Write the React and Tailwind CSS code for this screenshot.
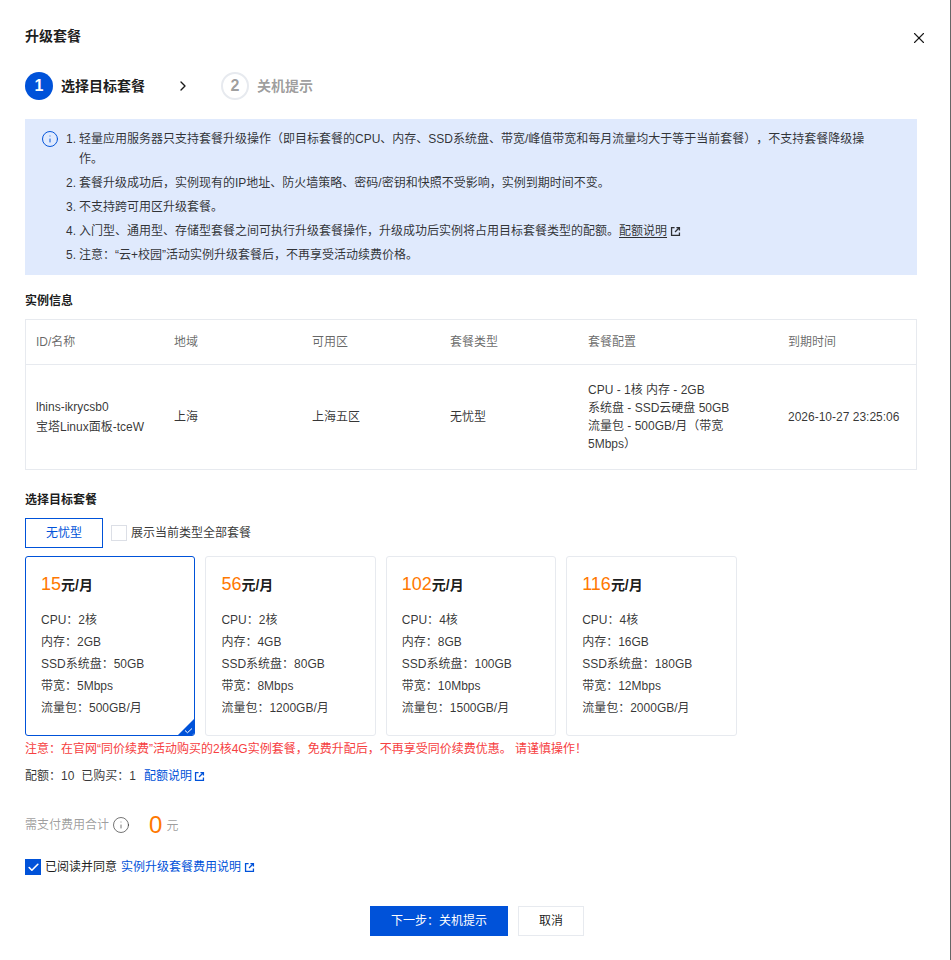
import { X, ChevronRight, Info, Check } from "lucide-react";

const plans = [
  { price: "15", cpu: "2核", mem: "2GB", ssd: "50GB", bw: "5Mbps", flow: "500GB/月", active: true },
  { price: "56", cpu: "2核", mem: "4GB", ssd: "80GB", bw: "8Mbps", flow: "1200GB/月" },
  { price: "102", cpu: "4核", mem: "8GB", ssd: "100GB", bw: "10Mbps", flow: "1500GB/月" },
  { price: "116", cpu: "4核", mem: "16GB", ssd: "180GB", bw: "12Mbps", flow: "2000GB/月" },
];

function ExtIcon({ className }) {
  return (
    <svg viewBox="0 0 12 12" fill="none" stroke="currentColor" strokeWidth="1.4" className={className}>
      <path d="M5 1.7H1.7v8.6h8.6V7" />
      <path d="M7 1.7h3.3V5M10.3 1.7L5.5 6.5" />
    </svg>
  );
}

function PlanCard({ plan }) {
  return (
    <div className={"relative w-[170.4px] h-[180px] rounded-[3px] border pl-[15px] pt-[15px] overflow-hidden " + (plan.active ? "border-[#0052d9]" : "border-[#e7eaef]")}>
      <div className="h-6 flex items-baseline font-bold text-[14px] leading-6 text-black/90">
        <span className="text-[18px] font-normal text-[#ff7800]">{plan.price}</span>
        <span>元/月</span>
      </div>
      <div className="mt-[13px] text-[12px] leading-[22px] text-black/80">
        <div>CPU：{plan.cpu}</div>
        <div>内存：{plan.mem}</div>
        <div>SSD系统盘：{plan.ssd}</div>
        <div>带宽：{plan.bw}</div>
        <div>流量包：{plan.flow}</div>
      </div>
      {plan.active && (
        <div className="absolute right-0 bottom-0 w-4 h-4">
          <svg viewBox="0 0 16 16" className="w-4 h-4">
            <path d="M16 0V16H0Z" fill="#0052d9" />
            <path d="M7 11.5l2.5 2.2L14 9.5" fill="none" stroke="#fff" strokeWidth="1" />
          </svg>
        </div>
      )}
    </div>
  );
}

export default function App() {
  return (
    <div className="w-[951px] h-[960px] overflow-hidden bg-white border-r border-[#666] pl-[25px] pr-[33px] font-['Liberation_Sans','Noto_Sans_CJK_SC',sans-serif] text-[12px] text-black/90">
      <div className="relative h-[72px] pt-[28px]">
        <div className="text-[14px] font-bold leading-4">升级套餐</div>
        <X size={18} strokeWidth={1.5} className="absolute right-[-11px] top-[29px] text-black/90" />
      </div>

      {/* steps */}
      <div className="flex items-center h-[28px]">
        <span className="w-[28px] h-[28px] rounded-full bg-[#0052d9] text-white flex items-center justify-center text-[16px] font-bold">1</span>
        <span className="ml-[8px] text-[14px] font-bold">选择目标套餐</span>
        <ChevronRight size={16} strokeWidth={2} className="ml-[30px] text-black/90" />
        <span className="ml-[30px] w-[28px] h-[28px] rounded-full border-2 border-[#e7eaef] text-black/40 flex items-center justify-center text-[16px] font-bold">2</span>
        <span className="ml-[8px] text-[14px] font-bold text-black/40">关机提示</span>
      </div>

      {/* alert */}
      <div className="mt-[19px] h-[156px] bg-[#e0eafd] flex pl-[16px] pt-[10px] pr-[46px] text-black/80">
        <Info size={18} strokeWidth={1.3} className="mt-[1px] shrink-0 text-[#0052d9]" />
        <ol className="ml-[7px] leading-[20px] flex flex-col gap-[4px]">
          <li className="flex"><span className="w-[13px] shrink-0">1.</span><span className="[text-spacing-trim:space-all]">轻量应用服务器只支持套餐升级操作（即目标套餐的CPU、内存、SSD系统盘、带宽/峰值带宽和每月流量均大于等于当前套餐），不支持套餐降级操作。</span></li>
          <li className="flex"><span className="w-[13px] shrink-0">2.</span><span>套餐升级成功后，实例现有的IP地址、防火墙策略、密码/密钥和快照不受影响，实例到期时间不变。</span></li>
          <li className="flex"><span className="w-[13px] shrink-0">3.</span><span>不支持跨可用区升级套餐。</span></li>
          <li className="flex"><span className="w-[13px] shrink-0">4.</span>
            <span className="flex items-center">入门型、通用型、存储型套餐之间可执行升级套餐操作，升级成功后实例将占用目标套餐类型的配额。<span className="underline underline-offset-2">配额说明</span><ExtIcon className="ml-[3px] w-[11px] h-[11px]" /></span>
          </li>
          <li className="flex"><span className="w-[13px] shrink-0">5.</span><span>注意：“云+校园”活动实例升级套餐后，不再享受活动续费价格。</span></li>
        </ol>
      </div>

      <div className="mt-[18px] font-bold leading-[16px]">实例信息</div>

      {/* instance table */}
      <div className="mt-[10px] border border-[#e7eaef] h-[151px]">
        <div className="flex h-[45px] items-center border-b border-[#e7eaef] pl-[10px] text-black/60">
          <div className="w-[138px]">ID/名称</div>
          <div className="w-[138px]">地域</div>
          <div className="w-[138px]">可用区</div>
          <div className="w-[138px]">套餐类型</div>
          <div className="w-[200px]">套餐配置</div>
          <div>到期时间</div>
        </div>
        <div className="flex h-[104px] items-center pl-[10px] text-black/80">
          <div className="w-[138px] leading-[20px]">
            <div>lhins-ikrycsb0</div>
            <div>宝塔Linux面板-tceW</div>
          </div>
          <div className="w-[138px]">上海</div>
          <div className="w-[138px]">上海五区</div>
          <div className="w-[138px]">无忧型</div>
          <div className="w-[200px] pr-[50px] leading-[18px]">
            <div>CPU - 1核 内存 - 2GB</div>
            <div>系统盘 - SSD云硬盘 50GB</div>
            <div>流量包 - 500GB/月（带宽5Mbps）</div>
          </div>
          <div>2026-10-27 23:25:06</div>
        </div>
      </div>

      <div className="mt-[22px] font-bold leading-[16px]">选择目标套餐</div>

      <div className="mt-[10px] flex items-center">
        <div className="w-[78px] h-[30px] border border-[#0052d9] text-[#0052d9] flex items-center justify-center">无忧型</div>
        <span className="ml-[8px] w-4 h-4 border border-[#dcdfe6]" />
        <span className="ml-[4px] text-black/80">展示当前类型全部套餐</span>
      </div>

      <div className="mt-[8px] flex gap-[10px]">
        {plans.map((p) => (
          <PlanCard key={p.price} plan={p} />
        ))}
      </div>

      <div className="mt-[4px] leading-[18px] text-[#f64041]">注意：在官网“同价续费”活动购买的2核4G实例套餐，免费升配后，不再享受同价续费优惠。 请谨慎操作！</div>

      <div className="mt-[9px] flex items-center leading-[18px] text-black/80">
        <span>配额：10</span>
        <span className="ml-[7px]">已购买：1</span>
        <span className="ml-[8px] text-[#0052d9]">配额说明</span>
        <ExtIcon className="ml-[2px] w-[11px] h-[11px] text-[#0052d9]" />
      </div>

      <div className="mt-[25px] flex items-center h-[30px] text-black/40">
        <span>需支付费用合计</span>
        <Info size={18} strokeWidth={1.2} className="ml-[3px] text-black/60" />
        <span className="ml-[19px] text-[24px] text-[#ff7800]">0</span>
        <span className="ml-[4px] mt-[2px]">元</span>
      </div>

      <div className="mt-[19px] flex items-center h-[16px]">
        <span className="w-4 h-4 bg-[#0052d9] flex items-center justify-center">
          <Check size={13} strokeWidth={3} className="text-white" />
        </span>
        <span className="ml-[4px]">已阅读并同意</span>
        <span className="ml-[4px] text-[#0052d9]">实例升级套餐费用说明</span>
        <ExtIcon className="ml-[3px] w-[11px] h-[11px] text-[#0052d9]" />
      </div>

      <div className="mt-[31px] flex justify-center gap-[10px] pl-[12px]">
        <div className="w-[138px] h-[30px] bg-[#0052d9] text-white flex items-center justify-center">下一步：关机提示</div>
        <div className="w-[66px] h-[30px] border border-[#e7eaef] flex items-center justify-center">取消</div>
      </div>
    </div>
  );
}
